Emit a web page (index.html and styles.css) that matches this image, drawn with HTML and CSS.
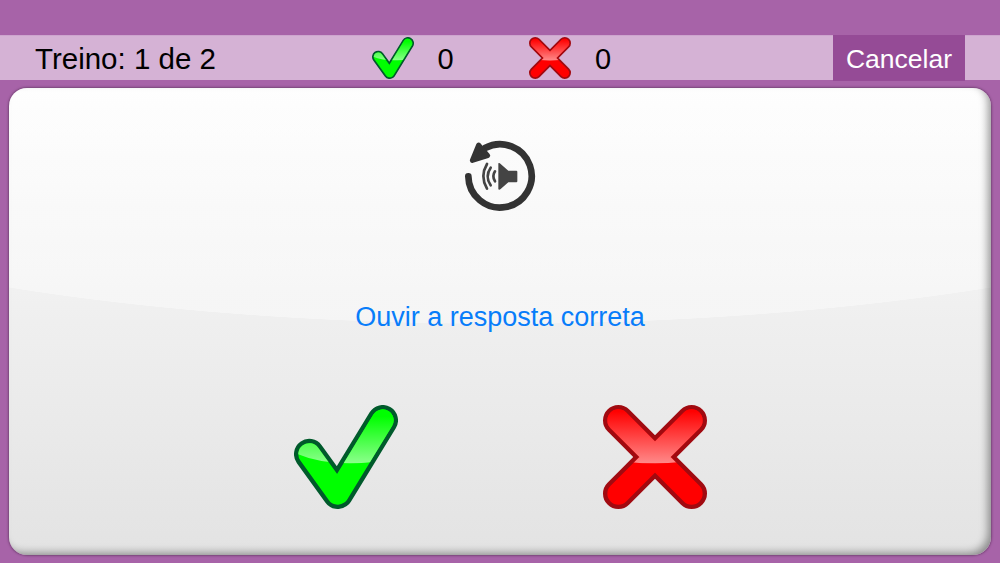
FILE: index.html
```html
<!DOCTYPE html>
<html lang="pt-BR">
<head>
  <meta charset="UTF-8">
  <meta name="viewport" content="width=device-width, initial-scale=1.0">
  <title>Treino</title>
  <link rel="stylesheet" href="styles.css">
</head>
<body>
  <!-- Shared icons -->
  <svg class="icon-defs" width="0" height="0">
    <defs>
      <linearGradient id="greenGloss" gradientUnits="userSpaceOnUse" x1="0" y1="65" x2="0" y2="205">
        <stop offset="0" stop-color="#00ff00"/>
        <stop offset="1" stop-color="#8aff8a"/>
      </linearGradient>
      <linearGradient id="redGloss" gradientUnits="userSpaceOnUse" x1="0" y1="50" x2="0" y2="205">
        <stop offset="0" stop-color="#ff0000"/>
        <stop offset="1" stop-color="#ff8888"/>
      </linearGradient>
      <clipPath id="checkTop"><path d="M0 0H375V178Q300 199 240 205Q120 214 30 176H0Z"/></clipPath>
      <clipPath id="crossTop"><path d="M0 0H375V178Q290 207 193 207Q97 207 0 178Z"/></clipPath>
    </defs>
    <symbol id="check" viewBox="26 31 313 313">
      <g fill="none" stroke-linecap="round" stroke-linejoin="round">
        <path d="M72 179L158 298L293 77" stroke="#005a2b" stroke-width="92"/>
        <path d="M72 179L158 298L293 77" stroke="#00ff00" stroke-width="66"/>
        <path d="M72 179L158 298L293 77" stroke="url(#greenGloss)" stroke-width="66" clip-path="url(#checkTop)"/>
      </g>
    </symbol>
    <symbol id="cross" viewBox="38 32 311 311">
      <g fill="none" stroke-linecap="round">
        <path d="M84 78L303 297M303 78L84 297" stroke="#a10a10" stroke-width="92"/>
        <path d="M84 78L303 297M303 78L84 297" stroke="#ff0000" stroke-width="66"/>
        <path d="M84 78L303 297M303 78L84 297" stroke="url(#redGloss)" stroke-width="66" clip-path="url(#crossTop)"/>
      </g>
    </symbol>
  </svg>

  <header class="topbar">
    <span class="progress">Treino: 1 de 2</span>
    <div class="score right">
      <svg><use href="#check"/></svg>
      <span>0</span>
    </div>
    <div class="score wrong">
      <svg><use href="#cross"/></svg>
      <span>0</span>
    </div>
    <button class="cancel">Cancelar</button>
  </header>

  <main class="card">
    <button class="replay" aria-label="Ouvir de novo">
      <svg viewBox="0 -1 270 270">
        <path d="M40 138A95 95 0 1 0 90 53" fill="none" stroke="#333" stroke-width="20" stroke-linecap="round"/>
        <path d="M71 44L98 76L52 90Z" fill="#333" stroke="#333" stroke-width="15" stroke-linejoin="round"/>
        <path d="M130 99Q133 97 137 101L160 121H184Q187 121 187 124V153Q187 156 184 156H160L137 176Q133 180 130 177Z" fill="#444"/>
        <g fill="none" stroke="#444" stroke-width="8" stroke-linecap="round">
          <path d="M120 123Q110 138 120 153"/>
          <path d="M107 112Q89 138 107 165"/>
          <path d="M96 101Q74 138 96 175"/>
        </g>
      </svg>
    </button>
    <a class="listen">Ouvir a resposta correta</a>
    <div class="answers">
      <button aria-label="Acertei"><svg><use href="#check"/></svg></button>
      <button aria-label="Errei"><svg><use href="#cross"/></svg></button>
    </div>
  </main>
</body>
</html>
```
FILE: styles.css
```css
* {
  box-sizing: border-box;
}

body {
  display: flex;
  flex-direction: column;
  height: 563px;
  margin: 0;
  padding: 35px 9px 8px;
  background-color: #a763a8;
  font-family: "Liberation Sans", Arial, sans-serif;
  overflow: hidden;
}

button {
  padding: 0;
  border: 0;
  background: none;
  font-family: inherit;
  cursor: pointer;
}

svg {
  display: block;
}

.icon-defs {
  position: absolute;
}

.topbar {
  display: flex;
  flex: none;
  align-items: center;
  height: 45px;
  margin: 0 -9px;
  padding: 0 35px;
  background-color: #d5b2d5;
  border-top: 1px solid #cda5ce;
  font-size: 29px;
  line-height: 44px;
  color: #000;
}

.progress {
  width: 336.5px;
  padding-top: 2px;
  font-size: 29.5px;
}

.score {
  display: flex;
  align-items: center;
  width: 157.5px;
}

.score svg {
  width: 42px;
  height: 42px;
  margin-right: 24px;
}

.score span {
  padding-top: 2px;
}

.cancel {
  width: 132px;
  height: 46px;
  margin: -1px 0 -1px auto;
  padding-top: 2px;
  background-color: #954b96;
  color: #fff;
  font-size: 26.5px;
}

.card {
  display: flex;
  flex: 1;
  flex-direction: column;
  align-items: center;
  margin-top: 8px;
  padding-top: 42px;
  border-radius: 18px;
  /* curved highlight over the grey fade */
  background:
    radial-gradient(ellipse 922px 236px at 50% 0, rgba(255, 255, 255, 0.38) 99.8%, transparent 100%),
    linear-gradient(#fdfdfd 0%, #efefef 50%, #e3e3e3 100%);
  box-shadow:
    0 0 2px 1px rgba(90, 50, 90, 0.6),
    inset -5px -4px 8px -2px rgba(0, 0, 0, 0.4);
}

.replay svg {
  width: 90px;
  height: 90px;
}

.listen {
  margin-top: 82px;
  color: #087dfa;
  font-size: 27px;
  line-height: 30px;
}

.answers {
  display: flex;
  gap: 205px;
  margin-top: 73px;
}

.answers svg {
  width: 104px;
  height: 104px;
}
```
